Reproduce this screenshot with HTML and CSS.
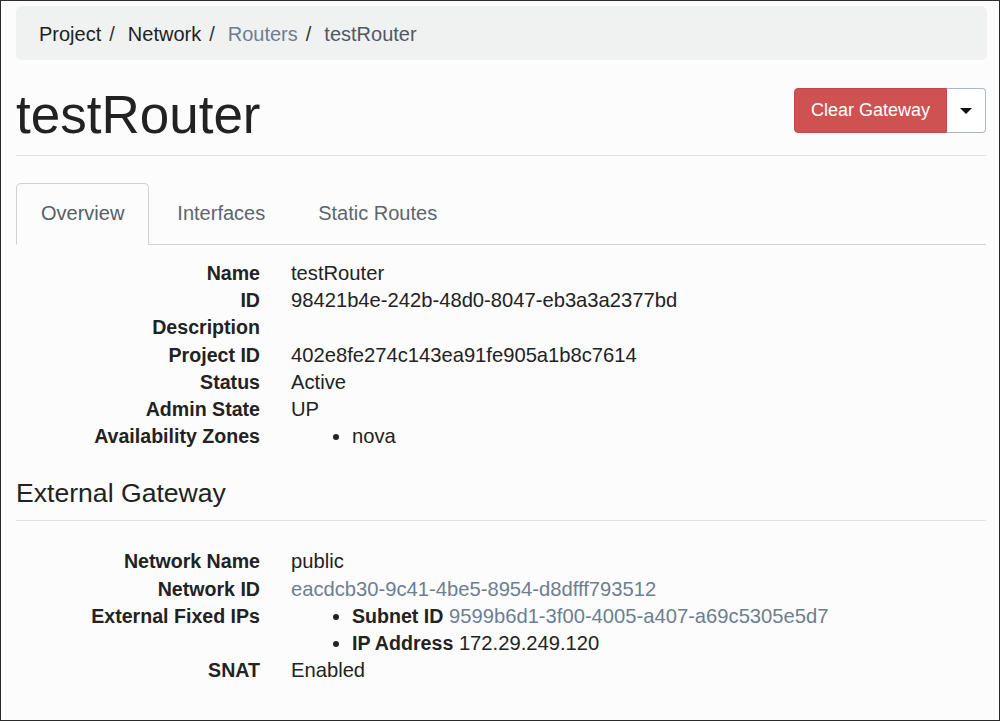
FILE: index.html
```html
<!DOCTYPE html>
<html>
<head>
<meta charset="utf-8">
<title>testRouter</title>
<link rel="stylesheet" href="styles.css">
</head>
<body>
<div class="page">
  <ol class="breadcrumb">
    <li>Project</li>
    <li>Network</li>
    <li><a href="#">Routers</a></li>
    <li class="active">testRouter</li>
  </ol>

  <div class="page-header">
    <h1>testRouter</h1>
    <div class="btn-group">
      <button class="btn btn-danger">Clear Gateway</button>
      <button class="btn btn-caret"><span class="caret"></span></button>
    </div>
  </div>

  <ul class="tabs">
    <li class="tab active">Overview</li>
    <li class="tab">Interfaces</li>
    <li class="tab">Static Routes</li>
  </ul>

  <dl class="details">
    <dt>Name</dt><dd>testRouter</dd>
    <dt>ID</dt><dd>98421b4e-242b-48d0-8047-eb3a3a2377bd</dd>
    <dt>Description</dt><dd></dd>
    <dt>Project ID</dt><dd>402e8fe274c143ea91fe905a1b8c7614</dd>
    <dt>Status</dt><dd>Active</dd>
    <dt>Admin State</dt><dd>UP</dd>
    <dt>Availability Zones</dt><dd><ul class="bullets"><li>nova</li></ul></dd>
  </dl>

  <h4 class="section">External Gateway</h4>

  <dl class="details gw">
    <dt>Network Name</dt><dd>public</dd>
    <dt>Network ID</dt><dd><a href="#">eacdcb30-9c41-4be5-8954-d8dfff793512</a></dd>
    <dt>External Fixed IPs</dt>
    <dd>
      <ul class="bullets">
        <li><strong>Subnet ID</strong> <a href="#">9599b6d1-3f00-4005-a407-a69c5305e5d7</a></li>
        <li><strong>IP Address</strong> 172.29.249.120</li>
      </ul>
    </dd>
    <dt>SNAT</dt><dd>Enabled</dd>
  </dl>
</div>
</body>
</html>
```

FILE: styles.css
```css
* { box-sizing: border-box; }

html, body {
  margin: 0;
  height: 100%;
}

body {
  border: 1px solid #2b2b2b;
  background: #fcfcfc;
  font-family: "Liberation Sans", Arial, Helvetica, sans-serif;
  font-size: 20px;
  line-height: 27.2px;
  color: #222;
  overflow: hidden;
}

a {
  color: #6d7e92;
  text-decoration: none;
}

.page {
  padding: 5px 12px 0 15px;
}

/* Breadcrumb */
.breadcrumb {
  list-style: none;
  margin: 0;
  height: 54px;
  padding: 4px 23px 0;
  background: #f0f1f1;
  border-radius: 6px;
  display: flex;
  align-items: center;
}

.breadcrumb li {
  color: #222;
}

.breadcrumb li + li::before {
  content: "/";
  color: #333;
  padding: 0 13px 0 8px;
}

.breadcrumb li.active {
  color: #4f5965;
}

/* Header */
.page-header {
  display: flex;
  justify-content: space-between;
  align-items: flex-start;
  border-bottom: 1px solid #e1e1e1;
  margin-right: 1px;
  padding: 27px 0 12px;
}

.page-header h1 {
  margin: 0;
  font-size: 53px;
  font-weight: normal;
  line-height: 56px;
  color: #222;
}

.btn-group {
  display: flex;
  margin-top: 1px;
}

.btn {
  font-family: inherit;
  font-size: 18px;
  height: 45px;
  border-radius: 4px;
  cursor: pointer;
}

.btn-danger {
  background: #cf5252;
  color: #fff;
  border: 1px solid #c44a4a;
  border-top-right-radius: 0;
  border-bottom-right-radius: 0;
  width: 153px;
  padding: 0;
}

.btn-caret {
  width: 39px;
  background: #fff;
  border: 1px solid #aeb6bf;
  border-left: none;
  border-top-left-radius: 0;
  border-bottom-left-radius: 0;
  display: flex;
  align-items: center;
  justify-content: center;
  padding: 0;
}

.caret {
  width: 0;
  height: 0;
  border-left: 6px solid transparent;
  border-right: 6px solid transparent;
  border-top: 6px solid #111;
}

/* Tabs */
.tabs {
  list-style: none;
  margin: 27px 1px 0 0;
  padding: 0;
  display: flex;
  border-bottom: 1px solid #cdd2d7;
}

.tab {
  height: 62px;
  padding: 0 24px;
  margin-right: 3px;
  margin-bottom: -1px;
  display: flex;
  align-items: center;
  color: #5b6570;
  border: 1px solid transparent;
  border-radius: 5px 5px 0 0;
}

.tab.active {
  color: #545e69;
  border-color: #cdd2d7;
  border-bottom-color: #fcfcfc;
  background: #fcfcfc;
}

/* Details */
.details {
  display: grid;
  grid-template-columns: 244px 1fr;
  column-gap: 31px;
  margin: 15px 0 0;
}

.details dt {
  font-weight: bold;
  font-size: 19.6px;
  text-align: right;
  color: #222;
}

.details dd {
  margin: 0;
  min-height: 27.2px;
  font-size: 20.2px;
}

.bullets {
  margin: 0;
  padding-left: 61px;
  list-style: disc;
}

.bullets strong {
  color: #222;
  font-size: 19.6px;
}

.section {
  margin: 28px 1px 0 0;
  font-size: 26.6px;
  font-weight: normal;
  line-height: 30px;
  padding-bottom: 12px;
  border-bottom: 1px solid #e1e1e1;
  color: #222;
}

.details.gw {
  margin-top: 27px;
}
```
